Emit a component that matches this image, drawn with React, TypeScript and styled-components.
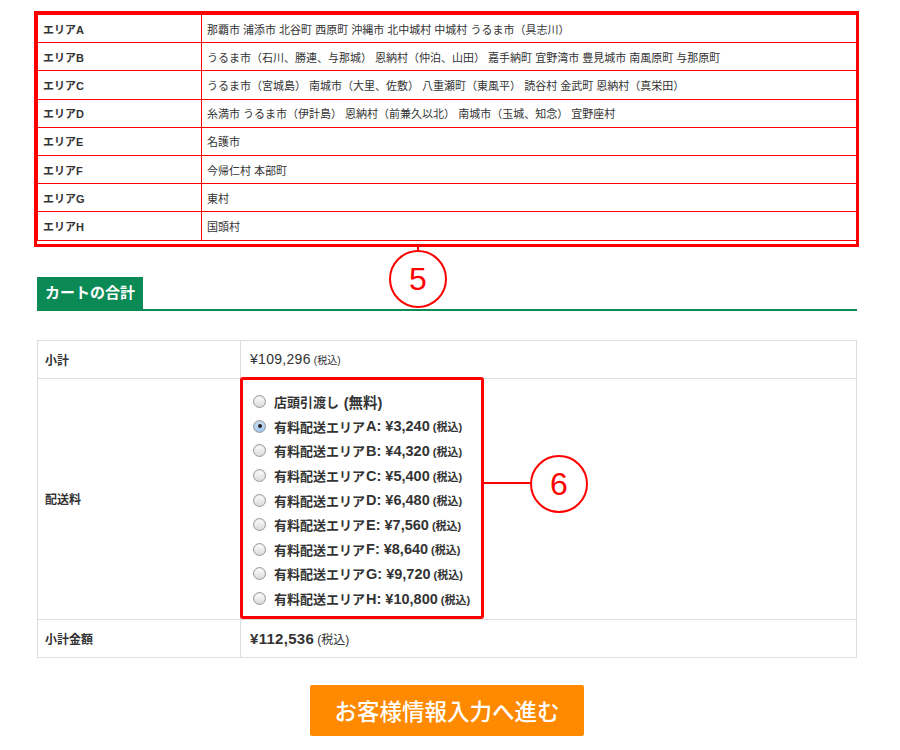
import React from 'react'
import styled, { createGlobalStyle } from 'styled-components'

const variables = {
  red: '#ff0000',
  green: '#0b8a55',
  orange: '#ff8a00',
  text: '#333333',
  line: '#dddddd'
}

const GlobalStyle = createGlobalStyle`
  body {
    margin: 0;
    background: #ffffff;
    color: ${variables.text};
    font-family: "Liberation Sans", "Noto Sans CJK JP", sans-serif;
  }
`

const Page = styled.div`
  width: 820px;
  padding: 11px 0 0 37px;
`
const AreaFrame = styled.div`
  position: relative;
  width: 825px;
  margin-left: -3px;
  border: 3px solid ${variables.red};
  padding: 0 2px 3px 0;
  box-sizing: border-box;
`
const AreaTable = styled.table`
  width: 820px;
  border-collapse: collapse;
  font-size: 11px;
  td {
    border: 1px solid ${variables.red};
    height: 27.2px;
    padding: 0 5px;
    vertical-align: middle;
  }
  td:first-child {
    width: 153px;
    font-weight: bold;
  }
`
const Connector = styled.div<{ $vertical?: boolean }>`
  position: absolute;
  background: ${variables.red};
  ${p => (p.$vertical ? 'width: 2px; height: 4px;' : 'height: 2px; width: 48px;')}
`
const Marker = styled.div`
  position: absolute;
  width: 58px;
  height: 58px;
  border: 2px solid ${variables.red};
  border-radius: 50%;
  box-sizing: border-box;
  background: #ffffff;
  display: flex;
  align-items: center;
  justify-content: center;
  color: ${variables.red};
  font-size: 32px;
  line-height: 1;
`
const Heading = styled.div`
  margin-top: 30px;
  border-bottom: 2px solid ${variables.green};
  display: flex;
`
const HeadingTab = styled.h2`
  margin: 0;
  background: ${variables.green};
  color: #ffffff;
  font-size: 15px;
  font-weight: bold;
  height: 32px;
  line-height: 32px;
  padding: 0 8px;
`
const CartTable = styled.table`
  width: 820px;
  margin-top: 29px;
  border-collapse: collapse;
  font-size: 12px;
  th,
  td {
    border: 1px solid ${variables.line};
    height: 37px;
    padding: 0 0 0 9px;
    text-align: left;
    vertical-align: middle;
  }
  th {
    width: 195px;
    padding-left: 7px;
    font-weight: bold;
  }
`
const Amount = styled.span<{ $strong?: boolean }>`
  font-size: ${p => (p.$strong ? '15px' : '14px')};
  font-weight: ${p => (p.$strong ? 'bold' : 'normal')};
  letter-spacing: 0.3px;
`
const Tax = styled.span<{ $size?: number }>`
  font-size: ${p => p.$size || 10}px;
  margin-left: 3px;
`
const ShipCell = styled.td`
  && {
    padding: 0;
    vertical-align: top;
  }
`
const ShipBox = styled.div`
  position: relative;
  width: 244px;
  height: 242px;
  margin: -2px 0 0 -1px;
  border: 3px solid ${variables.red};
  border-radius: 3px;
  box-sizing: border-box;
  padding: 10px 0 0 10px;
`
const ShipList = styled.ul`
  list-style: none;
  margin: 0;
  padding: 0;
`
const ShipItem = styled.li`
  display: flex;
  align-items: center;
  height: 24.6px;
  font-size: 13px;
  font-weight: bold;
  white-space: pre;
`
const Price = styled.span`
  font-size: 14.5px;
  margin-left: 1px;
`
const Radio = styled.span<{ $checked?: boolean }>`
  position: relative;
  width: 11px;
  height: 11px;
  border-radius: 50%;
  border: 1px solid #9a9a9a;
  margin-right: 8px;
  background: ${p =>
    p.$checked
      ? 'linear-gradient(#cfe3f7, #9fc3ea)'
      : 'linear-gradient(#ffffff, #d9d9d9)'};
  box-shadow: inset 0 1px 1px rgba(0, 0, 0, 0.1);
  ${p =>
    p.$checked &&
    `&::after {
      content: '';
      position: absolute;
      left: 3.5px;
      top: 3.5px;
      width: 4px;
      height: 4px;
      border-radius: 50%;
      background: #222;
    }`}
`
const ButtonRow = styled.div`
  display: flex;
  justify-content: center;
  margin-top: 27px;
`
const NextButton = styled.button`
  width: 274px;
  height: 51px;
  border: none;
  border-radius: 2px;
  background: ${variables.orange};
  color: #ffffff;
  font-family: "Noto Sans CJK JP", sans-serif;
  font-size: 22.5px;
  font-weight: 500;
  cursor: pointer;
`

const areas = [
  ['エリアA', '那覇市 浦添市 北谷町 西原町 沖縄市 北中城村 中城村 うるま市（具志川）'],
  ['エリアB', 'うるま市（石川、勝連、与那城） 恩納村（仲泊、山田） 嘉手納町 宜野湾市 豊見城市 南風原町 与那原町'],
  ['エリアC', 'うるま市（宮城島） 南城市（大里、佐敷） 八重瀬町（東風平） 読谷村 金武町 恩納村（真栄田）'],
  ['エリアD', '糸満市 うるま市（伊計島） 恩納村（前兼久以北） 南城市（玉城、知念） 宜野座村'],
  ['エリアE', '名護市'],
  ['エリアF', '今帰仁村 本部町'],
  ['エリアG', '東村'],
  ['エリアH', '国頭村']
]

const shipping = [
  ['A', '¥3,240'],
  ['B', '¥4,320'],
  ['C', '¥5,400'],
  ['D', '¥6,480'],
  ['E', '¥7,560'],
  ['F', '¥8,640'],
  ['G', '¥9,720'],
  ['H', '¥10,800']
]

const App: React.FC = () => {
  return (
    <Page>
      <GlobalStyle />
      <AreaFrame>
        <AreaTable>
          <tbody>
            {areas.map(([name, cities]) => (
              <tr key={name}>
                <td>{name}</td>
                <td>{cities}</td>
              </tr>
            ))}
          </tbody>
        </AreaTable>
        <Connector $vertical style={{ left: 380, top: 'calc(100% + 3px)' }} />
        <Marker style={{ left: 352, top: 'calc(100% + 6px)' }}>5</Marker>
      </AreaFrame>

      <Heading>
        <HeadingTab>カートの合計</HeadingTab>
      </Heading>

      <CartTable>
        <tbody>
          <tr>
            <th>小計</th>
            <td>
              <Amount>¥109,296</Amount>
              <Tax>(税込)</Tax>
            </td>
          </tr>
          <tr>
            <th>配送料</th>
            <ShipCell>
              <ShipBox>
                <ShipList>
                  <ShipItem>
                    <Radio />
                    {'店頭引渡し '}
                    <Price>(無料)</Price>
                  </ShipItem>
                  {shipping.map(([area, price]) => (
                    <ShipItem key={area}>
                      <Radio $checked={area === 'A'} />
                      有料配送エリア<Price>{area}: {price}</Price>
                      <Tax $size={11}>(税込)</Tax>
                    </ShipItem>
                  ))}
                </ShipList>
                <Connector style={{ left: 'calc(100% + 3px)', top: 102 }} />
                <Marker style={{ left: 'calc(100% + 49px)', top: 75 }}>6</Marker>
              </ShipBox>
            </ShipCell>
          </tr>
          <tr>
            <th>小計金額</th>
            <td>
              <Amount $strong>¥112,536</Amount>
              <Tax $size={12}>(税込)</Tax>
            </td>
          </tr>
        </tbody>
      </CartTable>

      <ButtonRow>
        <NextButton>お客様情報入力へ進む</NextButton>
      </ButtonRow>
    </Page>
  )
}

export default App
